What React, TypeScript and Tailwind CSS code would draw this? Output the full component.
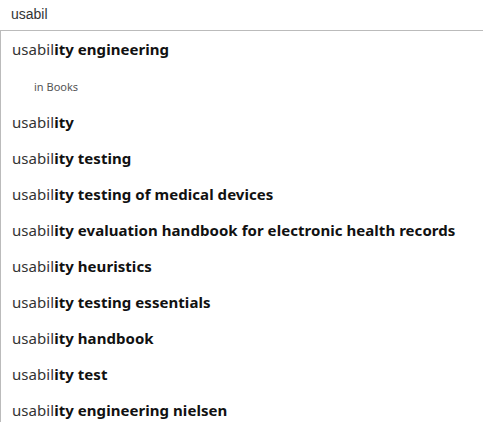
const suggestions = [
  "engineering",
  "",
  "testing",
  "testing of medical devices",
  "evaluation handbook for electronic health records",
  "heuristics",
  "testing essentials",
  "handbook",
  "test",
  "engineering nielsen",
];

function Suggestion({ rest }: { rest: string }) {
  return (
    <div className="h-9 flex items-center pl-[11px] text-[15px] whitespace-nowrap tracking-[0.05px]">
      <span className="text-[#333]">usabil</span>
      <span className="font-bold text-[#111]">
        ity{rest ? " " + rest : ""}
      </span>
    </div>
  );
}

export default function App() {
  return (
    <div className="w-[483px] h-[422px] overflow-hidden bg-white font-['Noto_Sans',sans-serif]">
      <div className="h-[30px] flex items-center pl-[11px] pb-[2px] text-[14px] text-[#333] font-['Liberation_Sans',Arial,sans-serif]">
        usabil
      </div>
      <div className="w-[500px] border-t border-l border-[#bbb]">
        <Suggestion rest={suggestions[0]} />
        <div className="h-[37px] flex items-center pl-[33px] pt-[4px] text-[11px] text-[#555]">
          in Books
        </div>
        {suggestions.slice(1).map((s, i) => (
          <Suggestion key={i} rest={s} />
        ))}
      </div>
    </div>
  );
}
